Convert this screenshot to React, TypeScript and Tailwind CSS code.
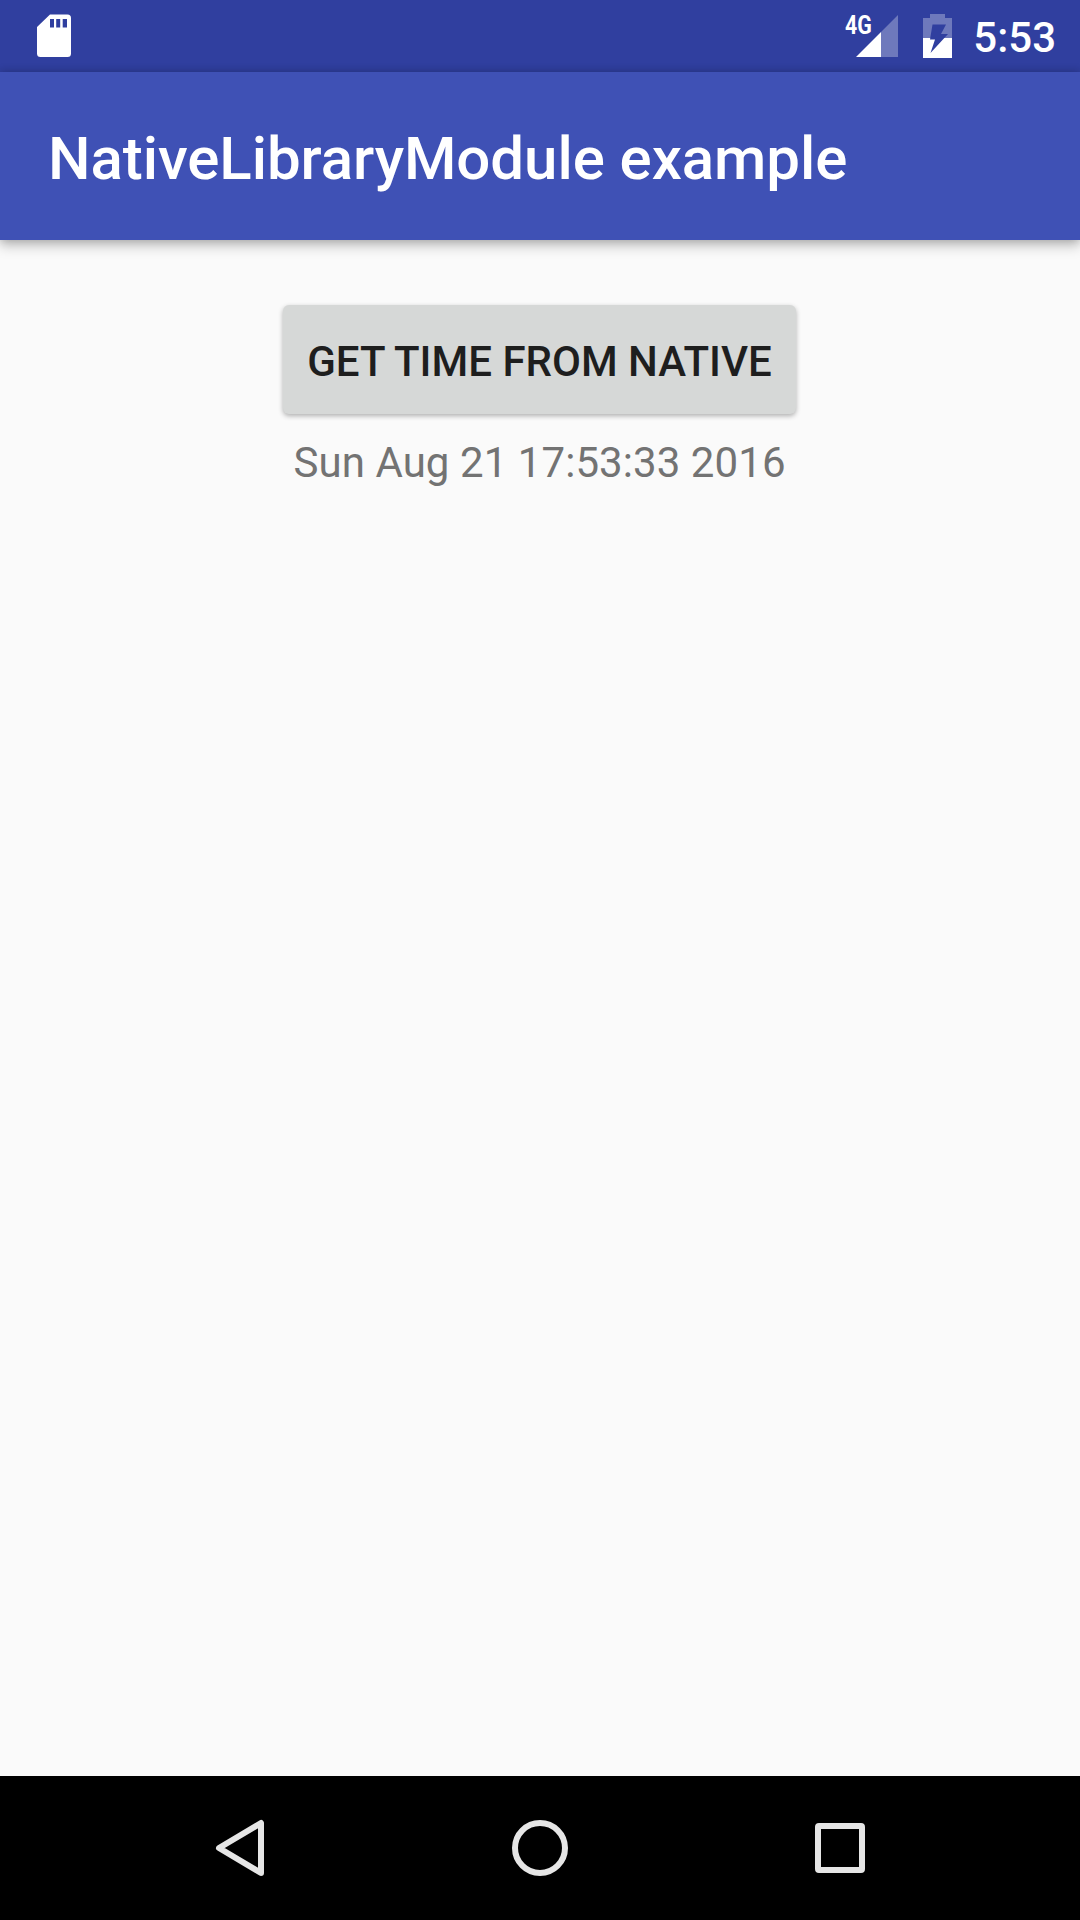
export default function App() {
  return (
    <div className="flex h-[1920px] w-[1080px] flex-col overflow-hidden bg-[#fafafa] font-[Roboto,sans-serif]">
      <header className="flex h-[72px] shrink-0 items-center justify-between bg-[#303f9f] pl-[37px] pr-6 text-white">
        <svg width="34" height="43" viewBox="0 0 34 43" className="mb-px shrink-0">
          <path fill="currentColor" fillRule="evenodd" d="M13 .5H30.500Q34 .5 34 4V39.500Q34 43 30.500 43H3.500Q0 43 0 39.500V13ZM13 5V13.500H17V5ZM19.200 5V13.500H23.200V5ZM25.700 5V13.500H30V5Z" />
        </svg>
        <div className="flex h-full items-center">
          <div className="relative mr-[25px] h-[42px] w-[42px]">
            <svg width="42" height="42" viewBox="0 0 42 42">
              <path fill="#fff" fillOpacity=".3" d="M42 0V42H25V17Z" />
              <path fill="#fff" d="M0 42L25 17V42Z" />
            </svg>
            <span className="absolute -left-[11px] -top-[2px] origin-left scale-x-[0.82] text-[26px] font-bold leading-6">4G</span>
          </div>
          <svg width="29" height="44" viewBox="0 0 29 44" className="mr-[21px]">
            <path fill="#fff" fillOpacity=".3" d="M7 0H22V4H29V24H0V4H7Z" />
            <path fill="#fff" d="M0 24H29V44H0Z" />
            <path fill="#303f9f" d="M9.500 10.500H23L18 20H25L7.500 39L12 25.500H7Z" />
          </svg>
          <span className="pt-[3px] text-[42px] font-medium leading-[48px]">5:53</span>
        </div>
      </header>
      <div className="relative flex h-[168px] shrink-0 items-center bg-[#3f51b5] px-12 pt-[5px] text-white shadow-[0_6px_12px_rgba(0,0,0,0.22),0_0_9px_rgba(0,0,0,0.2)]">
        <h1 className="text-[60px] font-medium leading-[72px] tracking-[-0.06px]">NativeLibraryModule example</h1>
      </div>
      <main className="flex flex-1 flex-col items-center pr-px pt-[65px]">
        <button className="flex h-[109px] w-[513px] items-center justify-center rounded-[6px] bg-[#d6d8d7] pt-1 text-[42px] font-medium leading-[50px] text-[#1e1e1e] shadow-[0_2px_5px_rgba(0,0,0,0.3)]">
          GET TIME FROM NATIVE
        </button>
        <p className="mt-6 text-[42px] leading-[50px] tracking-[0.07px] text-[#737373]">Sun Aug 21 17:53:33 2016</p>
      </main>
      <nav className="flex h-36 shrink-0 items-center justify-center bg-black">
        <svg width="300" height="144" viewBox="0 0 300 144" fill="none" stroke="#e6e6e6" strokeWidth="6" strokeLinejoin="round">
          <path d="M171 47V97L129 72Z" />
        </svg>
        <svg width="300" height="144" viewBox="0 0 300 144" fill="none" stroke="#e6e6e6" strokeWidth="6">
          <circle cx="150" cy="72" r="25" />
        </svg>
        <svg width="300" height="144" viewBox="0 0 300 144" fill="none" stroke="#e6e6e6" strokeWidth="6">
          <rect x="128" y="50" width="44" height="44" rx="1" />
        </svg>
      </nav>
    </div>
  );
}
